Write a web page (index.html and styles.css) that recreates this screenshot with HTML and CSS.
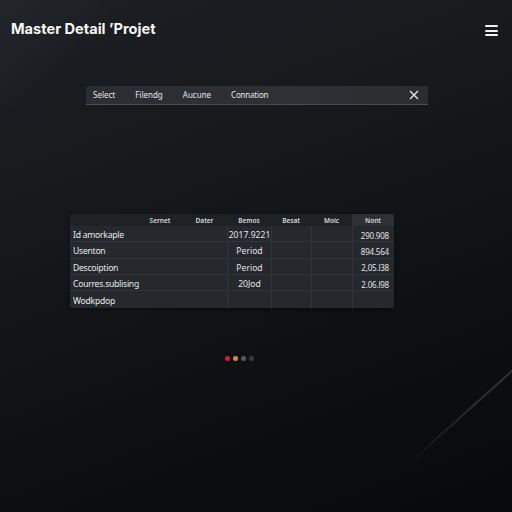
FILE: index.html
```html
<!DOCTYPE html>
<html>
<head>
<meta charset="utf-8">
<link rel="stylesheet" href="styles.css">
</head>
<body>
<div class="page">
  <div class="glow"></div>
  <div class="streak"></div>
  <header class="topbar">
    <h1 class="title">Master Detail ʼProjet</h1>
    <button class="menu" aria-label="menu"><span></span><span></span><span></span></button>
  </header>
  <nav class="filters">
    <span class="f">Select</span>
    <span class="f">Filendg</span>
    <span class="f">Aucune</span>
    <span class="f">Connation</span>
    <svg class="close" width="10" height="10" viewBox="0 0 10 10"><path d="M1 1L9 9M9 1L1 9" stroke="#e6e8ea" stroke-width="1.3" fill="none"/></svg>
  </nav>
  <section class="table">
    <div class="thead">
      <span></span><span>Sernet</span><span>Dater</span><span>Bemos</span><span>Besat</span><span>Moic</span><span class="hl">Nont</span>
    </div>
    <div class="row"><span class="lbl">Id amorkaple</span><span class="c">2017.9221</span><span></span><span></span><span class="n">290.908</span></div>
    <div class="row"><span class="lbl">Usenton</span><span class="c">Period</span><span></span><span></span><span class="n">894.564</span></div>
    <div class="row"><span class="lbl">Descoiption</span><span class="c">Period</span><span></span><span></span><span class="n">2,05.l38</span></div>
    <div class="row"><span class="lbl">Courres.sublising</span><span class="c">20Jod</span><span></span><span></span><span class="n">2.06.l98</span></div>
    <div class="row last"><span class="lbl">Wodkpdop</span><span class="c"></span><span></span><span></span><span class="n"></span></div>
  </section>
  <div class="dots">
    <span class="dot red"></span><span class="dot amber"></span><span class="dot gray"></span><span class="dot dark"></span>
  </div>
</div>
</body>
</html>
```

FILE: styles.css
```css
* { box-sizing: border-box; }
html, body { margin: 0; padding: 0; }
body {
  width: 512px;
  height: 512px;
  overflow: hidden;
  font-family: "Noto Sans", "DejaVu Sans", sans-serif;
  color: #e2e4e6;
}
.page {
  position: relative;
  width: 512px;
  height: 512px;
  overflow: hidden;
  background: linear-gradient(160deg, #1c1f23 0%, #16191c 35%, #0e1013 65%, #08090b 100%);
}
.glow {
  position: absolute;
  left: -60px;
  top: -60px;
  width: 140px;
  height: 140px;
  transform: rotate(45deg);
  background: linear-gradient(90deg, rgba(60,64,70,0.3), rgba(40,44,48,0.08));
  pointer-events: none;
}
.streak {
  position: absolute;
  left: 385px;
  top: 412px;
  width: 160px;
  height: 1.5px;
  transform: rotate(-42deg);
  background: linear-gradient(90deg, rgba(50,54,58,0), rgba(52,56,60,0.7) 55%, rgba(58,62,66,0.8));
  pointer-events: none;
}
.topbar {
  position: relative;
  display: flex;
  justify-content: space-between;
  align-items: flex-start;
  height: 58px;
  padding: 20px 14px 0 11px;
}
.title {
  margin: 0;
  font-family: Inter, "Noto Sans", sans-serif;
  font-size: 14.6px;
  line-height: 18px;
  font-weight: 700;
  color: #f6f6f6;
}
.menu {
  display: flex;
  flex-direction: column;
  gap: 2.5px;
  margin-top: 5px;
  padding: 0;
  border: 0;
  background: none;
}
.menu span {
  display: block;
  width: 13px;
  height: 2px;
  background: #f2f2f2;
  border-radius: 1px;
}
.filters {
  position: relative;
  display: flex;
  align-items: center;
  gap: 20px;
  width: 342px;
  height: 19px;
  margin: 28px 0 0 86px;
  padding: 0 9px 1px 7px;
  background: linear-gradient(90deg, #2a2d31, #2d3034 60%, #2a2d30);
  border-bottom: 1.5px solid #4a4d51;
  border-radius: 2px 2px 0 0;
  font-size: 8px;
  color: #e4e6e8;
}
.filters .f:last-of-type { letter-spacing: -0.2px; }
.close { margin-left: auto; }
.table {
  position: relative;
  width: 324px;
  margin: 109px 0 0 70px;
  background: #25282c;
  border-radius: 3px;
  overflow: hidden;
  box-shadow: 0 1px 4px rgba(0,0,0,0.5);
  font-size: 8.5px;
}
.thead {
  display: grid;
  grid-template-columns: 68px 44px 45px 44px 40px 41px 42px;
  height: 12px;
  padding-top: 1px;
  background: #1f2225;
  font-size: 6.5px;
  font-weight: 600;
  color: #d8dadc;
}
.thead span {
  display: flex;
  align-items: center;
  justify-content: center;
  color: #d8dadc;
}
.thead .hl { background: #2d3034; margin-top: -1px; }
.row {
  display: grid;
  grid-template-columns: 157px 44px 40px 41px 42px;
  height: 16.3px;
  border-bottom: 1px solid #313438;
  background: #25282c;
}
.row.last { height: 17px; border-bottom: 0; }
.row span {
  display: flex;
  align-items: center;
  padding-top: 3px;
  border-left: 1px solid #313438;
}
.row .lbl {
  border-left: 0;
  padding-left: 3px;
  font-size: 8.6px;
  letter-spacing: -0.25px;
  color: #e8eaec;
}
.row .c { justify-content: center; font-size: 8.6px; }
.row .n { justify-content: flex-end; padding-right: 5px; font-size: 8px; letter-spacing: -0.2px; }
.dots {
  display: flex;
  gap: 3.5px;
  margin: 48px 0 0 225px;
}
.dot {
  width: 4.5px;
  height: 4.5px;
  border-radius: 50%;
}
.red { background: #d4202a; }
.amber { background: #c89038; }
.gray { background: #55585c; }
.dark { background: #34373a; }
```
